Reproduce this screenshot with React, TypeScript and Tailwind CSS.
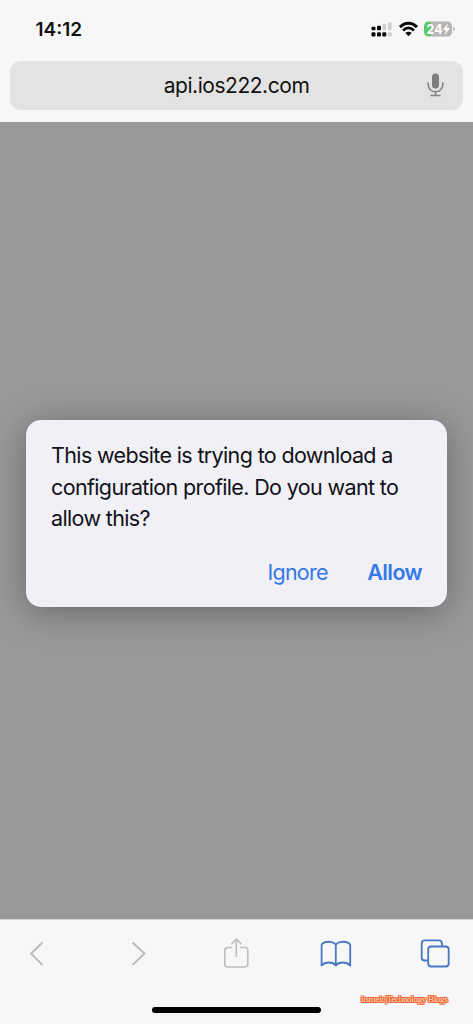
function StatusIcons() {
  return (
    <svg className="h-10 w-[113px]" viewBox="0 0 113 40" fill="none">
      <g fill="#080808">
        <rect x="11.5" y="16.8" width="4" height="3.4" rx="1" />
        <rect x="17" y="15.8" width="4" height="4.4" rx="1" />
        <rect x="11.5" y="22.2" width="4" height="4.3" rx="1.2" />
        <rect x="17" y="22.2" width="4" height="4.3" rx="1.2" />
        <rect x="22.3" y="22.2" width="4" height="4.3" rx="1.2" />
      </g>
      <g fill="#cfcfcf">
        <rect x="22.5" y="13.8" width="3.6" height="6.4" rx="1" />
        <rect x="28" y="12.2" width="3.6" height="8" rx="1" />
        <rect x="28" y="22.2" width="3.6" height="4.3" rx="1.2" />
      </g>
      <path d="M40 17.1C45 12 52 12 57 17.1" stroke="#080808" strokeWidth="3" />
      <path d="M43 20.5C46.6 17 50.4 17 54 20.5" stroke="#080808" strokeWidth="2.7" />
      <path d="M48.5 26.3L45.3 23C47.2 21.4 49.8 21.4 51.7 23Z" fill="#080808" />
      <path d="M71 11.5V26.5H68.5A4.5 4.5 0 0 1 64 22V16A4.5 4.5 0 0 1 68.5 11.5Z" fill="#5fc866" />
      <path d="M71 11.5H87.5A4.5 4.5 0 0 1 92 16V22A4.5 4.5 0 0 1 87.5 26.5H71Z" fill="#b5b5b5" />
      <path d="M93.2 16.7Q95 17.3 95 19T93.2 21.3Z" fill="#b9b9b9" />
      <text x="66.6" y="24" fill="white" fontSize="13.5" fontWeight="700" fontFamily="Inter, sans-serif" textLength="16" lengthAdjust="spacingAndGlyphs">24</text>
      <path d="M88 13L82.8 20H86L84.7 25L90 18H86.8Z" fill="white" />
    </svg>
  );
}

export default function App() {
  return (
    <div className="flex h-[1024px] w-[473px] flex-col overflow-hidden bg-[#f7f7f7] font-['Inter','Liberation_Sans',sans-serif] text-[#111]">
      <header className="h-[122px] shrink-0 px-[10px] pt-[10px]">
        <div className="-mr-[10px] flex h-[50.5px] items-start justify-between pl-[25.5px]">
          <time className="mt-[6px] text-[19px] leading-7 font-semibold tracking-[0px]">14:12</time>
          <StatusIcons />
        </div>
        <div className="grid h-[49px] grid-cols-[1fr_auto_1fr] items-center rounded-[11px] bg-[#e3e3e3]">
          <span />
          <span className="pt-px text-[21px] leading-7 tracking-[-0.45px]">api.ios222.com</span>
          <svg className="mr-[19px] h-6 w-[17px] justify-self-end" viewBox="0 0 17 24" fill="none">
            <rect x="5" y="0.5" width="7" height="15" rx="3.5" fill="#7d7d7d" />
            <path d="M1.2 9.5V11.5A7.3 7.3 0 0 0 15.8 11.5V9.5M8.5 18.8V22.5M3.5 22.6H13.5" stroke="#818181" strokeWidth="1.5" />
          </svg>
        </div>
      </header>
      <main className="flex h-[797px] shrink-0 items-start bg-[#999] px-[26px] pt-[298px]">
        <section role="dialog" className="h-[187px] w-[421px] rounded-[15px] bg-[#f1f0f7] px-[25px] pt-[20px] shadow-[0_5px_36px_rgba(0,0,0,0.32)]">
          <p className="text-[21.5px] leading-[31.5px] tracking-[-0.64px] whitespace-nowrap text-[#111118]">
            This website is trying to download a<br />configuration profile. Do you want to<br />allow this?
          </p>
          <div className="mt-[21.5px] flex h-8 items-center justify-end gap-[39.5px] text-[21.5px] tracking-[-0.6px] text-[#3478e8]">
            <button className="tracking-[-0.75px]">Ignore</button>
            <button className="font-semibold">Allow</button>
          </div>
        </section>
      </main>
      <footer className="h-[105px] shrink-0 border-t border-[#d5d5d5]">
        <nav className="flex h-[68px] items-center justify-between pr-[22.5px] pl-[20px]">
          <svg className="h-8 w-8" viewBox="0 0 32 32" fill="none" stroke="#bdbdbd" strokeWidth="2"><path d="M22.5 4.5L11 15.5L22.5 27" /></svg>
          <svg className="h-8 w-8" viewBox="0 0 32 32" fill="none" stroke="#bdbdbd" strokeWidth="2"><path d="M12.5 4.5L24.5 15.5L12.5 27" /></svg>
          <svg className="h-8 w-8" viewBox="-1.3 0 32 32" fill="none" stroke="#bdbdbd" strokeWidth="1.6"><path d="M12 9.5H7.5Q4.5 9.5 4.5 12.5V26Q4.5 29 7.5 29H24.5Q27.5 29 27.5 26V12.5Q27.5 9.5 24.5 9.5H20M16 19V1.2M11 6.2L16 1L21 6.2" /></svg>
          <svg className="h-8 w-8 overflow-visible" viewBox="-0.8 0 32 32" fill="none" stroke="#4878c2" strokeWidth="1.8" strokeLinejoin="round"><path d="M16 7C14 3 5 2.6 1.8 6.5V27.5C5.5 23.5 13 23.5 16 27.5C19 23.5 26.5 23.5 30.4 27.5V6.5C27 2.6 18 3 16 7V27.5" /></svg>
          <svg className="h-8 w-8" viewBox="0.3 0 32 32" fill="none" stroke="#4878c2" strokeWidth="1.8"><path d="M8.8 22.5H6Q3 22.5 3 19.5V5.5Q3 2.3 6 2.3H20Q23.2 2.3 23.2 5.5V8.5" /><rect x="9.5" y="8.5" width="20.5" height="20" rx="3" /></svg>
        </nav>
        <div className="relative flex justify-center pt-[19px]">
          <div className="h-[6px] w-[169px] rounded-full bg-black" />
          <span className="absolute top-[5px] left-[361px] font-['Liberation_Serif',serif] text-[9px] leading-3 tracking-[-0.31px] whitespace-nowrap text-[#ffe4d4] [text-shadow:1px_0_#ee571f,-1px_0_#ee571f,0_1px_#ee571f,0_-1px_#ee571f,1px_1px_#ee571f,-1px_-1px_#ee571f,1px_-1px_#ee571f,-1px_1px_#ee571f]">itsmeit |Technology Blogs</span>
        </div>
      </footer>
    </div>
  );
}
